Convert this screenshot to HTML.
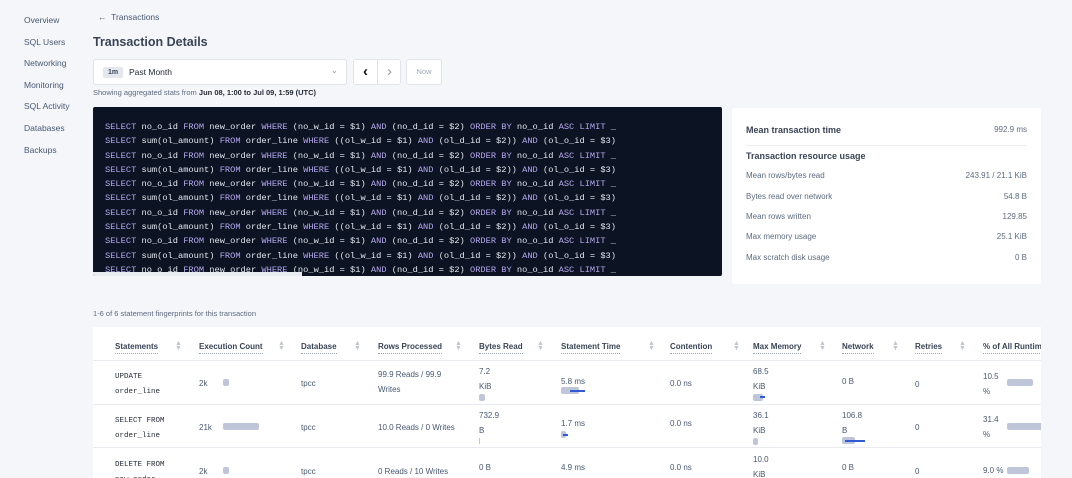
<!DOCTYPE html>
<html><head><style>
*{box-sizing:border-box;margin:0;padding:0}
body{width:1072px;height:478px;overflow:hidden;background:#f5f6fa;font-family:"Liberation Sans",sans-serif;color:#394455;position:relative}
.nav{position:absolute;left:24px;font-size:8.5px;color:#475872}
.abs{position:absolute}
.code{position:absolute;left:93px;top:107px;width:629px;height:169px;background:#0c1424;border-radius:2px;overflow:hidden;font-family:"Liberation Mono",monospace;font-size:8.7px;color:#e2e6ee;padding:13px 0 0 12px;line-height:14.3px;white-space:pre}
.k{color:#b7a8f0}
.panel{position:absolute;left:732px;top:108px;width:309px;height:176px;background:#fff;border-radius:3px}
.row{position:absolute;left:14px;right:14px;font-size:8px;color:#5d6b80;display:flex;justify-content:space-between}
.tbl{position:absolute;left:93px;top:327px;width:948px;height:151px;background:#fff;overflow:hidden}
.th{position:absolute;top:15px;font-size:8px;font-weight:bold;color:#394455;border-bottom:1px dotted #9aa4b4;padding-bottom:2px}
.ar{position:absolute;top:14px;font-size:7px;color:#c0c6d0;line-height:5px}
.td{position:absolute;font-size:8px;color:#475872;line-height:15px}
.m{font-family:"Liberation Mono",monospace;font-size:7.5px;color:#242a35}
.bar{position:absolute;height:7px;background:#c0c6d9;border-radius:2px}
.hl{position:absolute;left:0;right:0;height:1px;background:#e7eaf0}
</style></head><body>
<div class="nav" style="top:15px">Overview</div>
<div class="nav" style="top:37px">SQL Users</div>
<div class="nav" style="top:58px">Networking</div>
<div class="nav" style="top:80px">Monitoring</div>
<div class="nav" style="top:101px">SQL Activity</div>
<div class="nav" style="top:123px">Databases</div>
<div class="nav" style="top:145px">Backups</div>
<div class="abs" style="left:98px;top:12px;font-size:8.5px;color:#475872">&larr;&nbsp; Transactions</div>
<div class="abs" style="left:93px;top:35px;font-size:12.5px;font-weight:bold;color:#394455">Transaction Details</div>
<div class="abs" style="left:93px;top:59px;width:254px;height:26px;background:#fff;border:1px solid #e0e4ea;border-radius:3px">
<div class="abs" style="left:9px;top:7px;width:20px;height:11px;background:#e4e7ee;border-radius:2px;font-size:7px;font-weight:bold;text-align:center;line-height:11px">1m</div>
<div class="abs" style="left:35px;top:7px;font-size:8.5px;color:#242a35">Past Month</div>
<div class="abs" style="left:237px;top:6px;font-size:8px;color:#8a94a6">&#8964;</div></div>
<div class="abs" style="left:353px;top:59px;width:48px;height:26px;background:#fff;border:1px solid #e0e4ea;border-radius:3px">
<div class="abs" style="left:0;top:0;width:24px;height:24px;border-right:1px solid #e0e4ea;font-size:15px;font-weight:bold;text-align:center;line-height:23px;color:#111">&lsaquo;</div>
<div class="abs" style="left:24px;top:0;width:23px;height:24px;font-size:15px;text-align:center;line-height:23px;color:#99a">&rsaquo;</div></div>
<div class="abs" style="left:406px;top:59px;width:36px;height:26px;background:#fff;border:1px solid #e0e4ea;border-radius:3px;font-size:7.5px;color:#a0a8b6;text-align:center;line-height:24px">Now</div>
<div class="abs" style="left:93px;top:88px;font-size:7.5px;color:#5d6b80">Showing aggregated stats from <b style="color:#242a35">Jun 08, 1:00 to Jul 09, 1:59 (UTC)</b></div>
<div class="code"><span class="k">SELECT</span> no_o_id <span class="k">FROM</span> new_order <span class="k">WHERE</span> (no_w_id = $1) <span class="k">AND</span> (no_d_id = $2) <span class="k">ORDER BY</span> no_o_id <span class="k">ASC LIMIT</span> _
<span class="k">SELECT</span> sum(ol_amount) <span class="k">FROM</span> order_line <span class="k">WHERE</span> ((ol_w_id = $1) <span class="k">AND</span> (ol_d_id = $2)) <span class="k">AND</span> (ol_o_id = $3)
<span class="k">SELECT</span> no_o_id <span class="k">FROM</span> new_order <span class="k">WHERE</span> (no_w_id = $1) <span class="k">AND</span> (no_d_id = $2) <span class="k">ORDER BY</span> no_o_id <span class="k">ASC LIMIT</span> _
<span class="k">SELECT</span> sum(ol_amount) <span class="k">FROM</span> order_line <span class="k">WHERE</span> ((ol_w_id = $1) <span class="k">AND</span> (ol_d_id = $2)) <span class="k">AND</span> (ol_o_id = $3)
<span class="k">SELECT</span> no_o_id <span class="k">FROM</span> new_order <span class="k">WHERE</span> (no_w_id = $1) <span class="k">AND</span> (no_d_id = $2) <span class="k">ORDER BY</span> no_o_id <span class="k">ASC LIMIT</span> _
<span class="k">SELECT</span> sum(ol_amount) <span class="k">FROM</span> order_line <span class="k">WHERE</span> ((ol_w_id = $1) <span class="k">AND</span> (ol_d_id = $2)) <span class="k">AND</span> (ol_o_id = $3)
<span class="k">SELECT</span> no_o_id <span class="k">FROM</span> new_order <span class="k">WHERE</span> (no_w_id = $1) <span class="k">AND</span> (no_d_id = $2) <span class="k">ORDER BY</span> no_o_id <span class="k">ASC LIMIT</span> _
<span class="k">SELECT</span> sum(ol_amount) <span class="k">FROM</span> order_line <span class="k">WHERE</span> ((ol_w_id = $1) <span class="k">AND</span> (ol_d_id = $2)) <span class="k">AND</span> (ol_o_id = $3)
<span class="k">SELECT</span> no_o_id <span class="k">FROM</span> new_order <span class="k">WHERE</span> (no_w_id = $1) <span class="k">AND</span> (no_d_id = $2) <span class="k">ORDER BY</span> no_o_id <span class="k">ASC LIMIT</span> _
<span class="k">SELECT</span> sum(ol_amount) <span class="k">FROM</span> order_line <span class="k">WHERE</span> ((ol_w_id = $1) <span class="k">AND</span> (ol_d_id = $2)) <span class="k">AND</span> (ol_o_id = $3)
<span class="k">SELECT</span> no_o_id <span class="k">FROM</span> new_order <span class="k">WHERE</span> (no_w_id = $1) <span class="k">AND</span> (no_d_id = $2) <span class="k">ORDER BY</span> no_o_id <span class="k">ASC LIMIT</span> _
<div class="abs" style="left:0;bottom:0;width:209px;height:4px;background:#e8ebf0"></div></div>
<div class="panel">
<div class="row" style="top:17px;font-size:9px;font-weight:bold;color:#394455">Mean transaction time<span style="font-weight:normal;font-size:8px;color:#5d6b80">992.9 ms</span></div>
<div class="abs" style="left:14px;right:14px;top:37px;height:1px;background:#eceef2"></div>
<div class="row" style="top:43px;font-size:9px;font-weight:bold;color:#394455">Transaction resource usage</div>
<div class="row" style="top:63px">Mean rows/bytes read<span>243.91 / 21.1 KiB</span></div>
<div class="row" style="top:84px">Bytes read over network<span>54.8 B</span></div>
<div class="row" style="top:104px">Mean rows written<span>129.85</span></div>
<div class="row" style="top:124px">Max memory usage<span>25.1 KiB</span></div>
<div class="row" style="top:145px">Max scratch disk usage<span>0 B</span></div>
</div>
<div class="abs" style="left:93px;top:309px;font-size:7.5px;color:#5d6b80">1-6 of 6 statement fingerprints for this transaction</div>
<div class="tbl">
<div class="th" style="left:22px">Statements</div><div class="ar" style="left:82px">&#9650;<br>&#9660;</div>
<div class="th" style="left:106px">Execution Count</div><div class="ar" style="left:185px">&#9650;<br>&#9660;</div>
<div class="th" style="left:208px">Database</div><div class="ar" style="left:261px">&#9650;<br>&#9660;</div>
<div class="th" style="left:285px">Rows Processed</div><div class="ar" style="left:362px">&#9650;<br>&#9660;</div>
<div class="th" style="left:386px">Bytes Read</div><div class="ar" style="left:444px">&#9650;<br>&#9660;</div>
<div class="th" style="left:468px">Statement Time</div><div class="ar" style="left:555px">&#9650;<br>&#9660;</div>
<div class="th" style="left:577px">Contention</div><div class="ar" style="left:640px">&#9650;<br>&#9660;</div>
<div class="th" style="left:660px">Max Memory</div><div class="ar" style="left:726px">&#9650;<br>&#9660;</div>
<div class="th" style="left:749px">Network</div><div class="ar" style="left:799px">&#9650;<br>&#9660;</div>
<div class="th" style="left:822px">Retries</div><div class="ar" style="left:866px">&#9650;<br>&#9660;</div>
<div class="th" style="left:890px;white-space:nowrap">% of All Runtime</div>
<div class="hl" style="top:33px"></div><div class="hl" style="top:77px"></div><div class="hl" style="top:120px"></div>
<div class="td m" style="left:22px;top:43px">UPDATE<br>order_line</div>
<div class="td" style="left:106px;top:49px">2k</div><div class="bar" style="left:130px;top:52px;width:6px"></div>
<div class="td" style="left:208px;top:49px">tpcc</div>
<div class="td" style="left:285px;top:40px">99.9 Reads / 99.9<br>Writes</div>
<div class="td" style="left:386px;top:37px">7.2<br>KiB</div><div class="bar" style="left:386px;top:67px;width:6px"></div>
<div class="td" style="left:468px;top:47px">5.8 ms</div><div class="bar" style="left:468px;top:60px;width:18px"></div><div class="abs" style="left:477px;top:63px;width:15px;height:2px;background:#2f5bd3"></div>
<div class="td" style="left:577px;top:49px">0.0 ns</div>
<div class="td" style="left:660px;top:37px">68.5<br>KiB</div><div class="bar" style="left:660px;top:67px;width:10px"></div><div class="abs" style="left:667px;top:69px;width:5px;height:2px;background:#2f5bd3"></div>
<div class="td" style="left:749px;top:47px">0 B</div>
<div class="td" style="left:822px;top:50px">0</div>
<div class="td" style="left:890px;top:42px">10.5<br>%</div><div class="bar" style="left:914px;top:52px;width:26px"></div>
<div class="td m" style="left:22px;top:87px">SELECT FROM<br>order_line</div>
<div class="td" style="left:106px;top:93px">21k</div><div class="bar" style="left:130px;top:96px;width:36px"></div>
<div class="td" style="left:208px;top:93px">tpcc</div>
<div class="td" style="left:285px;top:93px">10.0 Reads / 0 Writes</div>
<div class="td" style="left:386px;top:81px">732.9<br>B</div><div class="abs" style="left:386px;top:111px;width:1px;height:6px;background:#c0c6d9"></div>
<div class="td" style="left:468px;top:89px">1.7 ms</div><div class="bar" style="left:468px;top:104px;width:5px"></div><div class="abs" style="left:470px;top:107px;width:5px;height:2px;background:#2f5bd3"></div>
<div class="td" style="left:577px;top:89px">0.0 ns</div>
<div class="td" style="left:660px;top:81px">36.1<br>KiB</div><div class="bar" style="left:660px;top:111px;width:5px"></div>
<div class="td" style="left:749px;top:81px">106.8<br>B</div><div class="bar" style="left:749px;top:110px;width:13px"></div><div class="abs" style="left:752px;top:113px;width:20px;height:2px;background:#2f5bd3"></div>
<div class="td" style="left:822px;top:93px">0</div>
<div class="td" style="left:890px;top:85px">31.4<br>%</div><div class="bar" style="left:914px;top:96px;width:40px"></div>
<div class="td m" style="left:22px;top:131px">DELETE FROM<br>new_order</div>
<div class="td" style="left:106px;top:137px">2k</div><div class="bar" style="left:130px;top:140px;width:6px"></div>
<div class="td" style="left:208px;top:137px">tpcc</div>
<div class="td" style="left:285px;top:137px">0 Reads / 10 Writes</div>
<div class="td" style="left:386px;top:133px">0 B</div>
<div class="td" style="left:468px;top:133px">4.9 ms</div>
<div class="td" style="left:577px;top:133px">0.0 ns</div>
<div class="td" style="left:660px;top:125px">10.0<br>KiB</div>
<div class="td" style="left:749px;top:133px">0 B</div>
<div class="td" style="left:822px;top:137px">0</div>
<div class="td" style="left:890px;top:136px">9.0 %</div><div class="bar" style="left:914px;top:140px;width:22px"></div>
</div>
</body></html>
